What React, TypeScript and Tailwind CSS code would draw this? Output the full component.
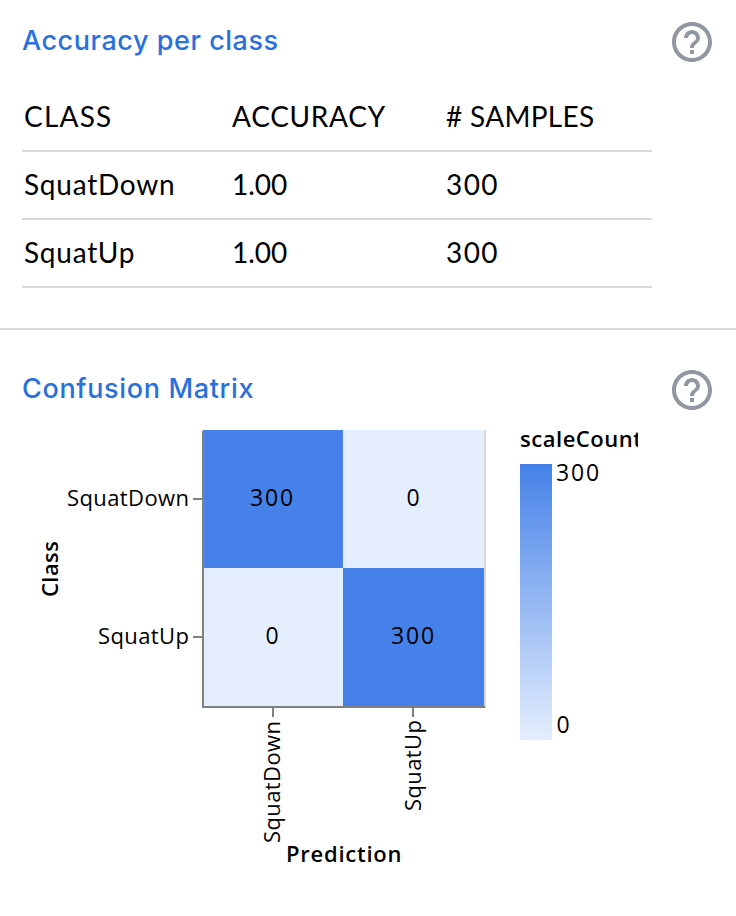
const rows = [
  { name: "SquatDown", accuracy: "1.00", samples: "300" },
  { name: "SquatUp", accuracy: "1.00", samples: "300" },
];

function HelpIcon() {
  return (
    <svg viewBox="0 0 24 24" className="size-12 shrink-0 fill-[#9097a0]" aria-label="Help">
      <path d="M11 18h2v-2h-2v2zm1-16C6.48 2 2 6.48 2 12s4.48 10 10 10 10-4.48 10-10S17.52 2 12 2zm0 18c-4.41 0-8-3.59-8-8s3.59-8 8-8 8 3.59 8 8-3.59 8-8 8zm0-14c-2.21 0-4 1.79-4 4h2c0-1.1.9-2 2-2s2 .9 2 2c0 2-3 1.75-3 5h2c0-2.25 3-2.5 3-5 0-2.21-1.79-4-4-4z" />
    </svg>
  );
}

function AccuracyTable() {
  return (
    <div className="mt-[18px] ml-[22px] w-[630px] text-[28px] leading-9 text-black">
      <div className="grid h-[68px] grid-cols-[208px_214px_1fr] items-center border-b-2 border-[#d9d9d9] pb-0.5 pl-0.5">
        <span className="tracking-[1.2px]">CLASS</span>
        <span className="tracking-[0.7px]">ACCURACY</span>
        <span className="tracking-[0.3px]"># SAMPLES</span>
      </div>
      {rows.map((r) => (
        <div
          key={r.name}
          className="grid h-[68px] grid-cols-[208px_214px_1fr] items-center border-b-2 border-[#d9d9d9] pb-0.5 pl-0.5"
        >
          <span className="tracking-[0.75px]">{r.name}</span>
          <span>{r.accuracy}</span>
          <span className="tracking-[1.4px]">{r.samples}</span>
        </div>
      ))}
    </div>
  );
}

function ConfusionMatrix() {
  return (
    <svg
      viewBox="0 0 736 500"
      className="block h-[500px] w-[736px] font-['Open_Sans',sans-serif] text-[22px]"
      role="img"
    >
      <defs>
        <linearGradient id="scale" x1="0" y1="0" x2="0" y2="1">
          <stop offset="0" stopColor="#4581e8" />
          <stop offset="1" stopColor="#e4eefd" />
        </linearGradient>
        <clipPath id="legendClip">
          <rect x="510" y="0" width="128" height="60" />
        </clipPath>
      </defs>
      <g shapeRendering="crispEdges">
        <rect x="484" y="14" width="2" height="278" fill="#d9d9d9" />
        <rect x="203" y="14" width="140" height="138" fill="#4581e8" />
        <rect x="343" y="14" width="141" height="138" fill="#e4eefd" />
        <rect x="203" y="152" width="140" height="138" fill="#e4eefd" />
        <rect x="343" y="152" width="141" height="138" fill="#4581e8" />
        <g fill="#808080">
          <rect x="202" y="15" width="2" height="277" />
          <rect x="203" y="290" width="282" height="2" />
          <rect x="193" y="82" width="9" height="2" />
          <rect x="193" y="220" width="9" height="2" />
          <rect x="272" y="292" width="2" height="9" />
          <rect x="412" y="292" width="2" height="9" />
        </g>
        <rect x="520" y="48" width="32" height="276" fill="url(#scale)" />
      </g>
      <g fill="#000">
        <text x="67" y="90" textLength="122">SquatDown</text>
        <text x="98" y="228" textLength="91">SquatUp</text>
        <g className="text-[23px] tracking-[1.8px]">
          <text x="250" y="90">300</text>
          <text x="406.500" y="90">0</text>
          <text x="265.500" y="228">0</text>
          <text x="391" y="228">300</text>
          <text x="556" y="65">300</text>
          <text x="556.500" y="317">0</text>
        </g>
        <text transform="translate(280 427) rotate(-90)" textLength="122">SquatDown</text>
        <text transform="translate(421 395) rotate(-90)" textLength="91">SquatUp</text>
        <g className="font-semibold">
          <text transform="translate(58 181) rotate(-90)" textLength="56">Class</text>
          <text x="286" y="446" textLength="115.500">Prediction</text>
          <text x="520" y="31" textLength="122" clipPath="url(#legendClip)">scaleCount</text>
        </g>
      </g>
    </svg>
  );
}

export default function App() {
  return (
    <main className="h-[916px] w-[736px] overflow-hidden bg-white font-[Lato,sans-serif]">
      <section className="h-[330px] border-b-2 border-[#d9d9d9] pt-[18px]">
        <header className="flex h-12 items-center justify-between pr-5 pl-[22px]">
          <h2 className="pb-0.5 font-[Inter,sans-serif] text-[27px] font-medium tracking-[0.55px] text-[#2a70dd]">Accuracy per class</h2>
          <HelpIcon />
        </header>
        <AccuracyTable />
      </section>
      <section className="pt-9">
        <header className="flex h-12 items-center justify-between pr-5 pl-[22px]">
          <h2 className="pb-0.5 font-[Inter,sans-serif] text-[27px] font-medium tracking-[0.65px] text-[#2a70dd]">Confusion Matrix</h2>
          <HelpIcon />
        </header>
        <div className="mt-0.5">
          <ConfusionMatrix />
        </div>
      </section>
    </main>
  );
}
